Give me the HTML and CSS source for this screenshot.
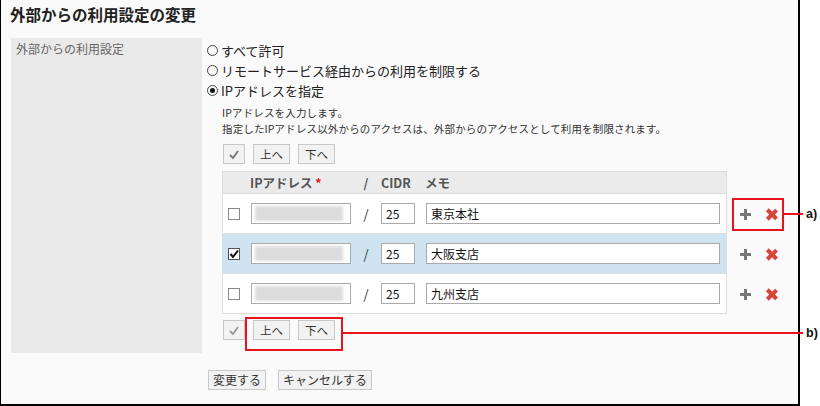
FILE: index.html
```html
<!DOCTYPE html>
<html lang="ja">
<head>
    <meta charset="UTF-8">
    <title>外部からの利用設定の変更</title>
    <link rel="stylesheet" href="styles.css">
</head>
<body>
    <div class="frame">
        <h1>外部からの利用設定の変更</h1>
        <div class="setting">
            <div class="setting-label">外部からの利用設定</div>
            <div class="setting-body">
                <div class="radio-line"><span class="radio"></span>すべて許可</div>
                <div class="radio-line"><span class="radio"></span>リモートサービス経由からの利用を制限する</div>
                <div class="radio-line"><span class="radio on"></span>IPアドレスを指定</div>

                <div class="ip-box">
                    <p class="desc">IPアドレスを入力します。</p>
                    <p class="desc">指定したIPアドレス以外からのアクセスは、外部からのアクセスとして利用を制限されます。</p>

                    <div class="toolbar">
                        <button class="btn btn-check"><svg width="10" height="9" viewBox="0 0 10 9"><path d="M1 5 L4 8 L9 1" fill="none" stroke="#777" stroke-width="1.8"/></svg></button>
                        <button class="btn">上へ</button>
                        <button class="btn">下へ</button>
                    </div>

                    <div class="ip-grid">
                        <div class="ip-head">
                            <span class="h-ip">IPアドレス <span class="req">*</span></span>
                            <span class="h-slash">/</span>
                            <span class="h-cidr">CIDR</span>
                            <span class="h-memo">メモ</span>
                        </div>
                        <div></div>

                        <div class="ip-row">
                            <span class="cb"></span>
                            <span class="field f-ip"><span class="blur"></span></span>
                            <span class="slash">/</span>
                            <span class="field f-cidr">25</span>
                            <span class="field f-memo">東京本社</span>
                        </div>
                        <div class="tools"><span class="i-add"></span><span class="i-del"></span></div>

                        <div class="ip-row selected">
                            <span class="cb checked"><svg width="10" height="10" viewBox="0 0 10 10"><path d="M1.5 5 L4 8 L9 1.5" fill="none" stroke="#111" stroke-width="2"/></svg></span>
                            <span class="field f-ip"><span class="blur"></span></span>
                            <span class="slash">/</span>
                            <span class="field f-cidr">25</span>
                            <span class="field f-memo">大阪支店</span>
                        </div>
                        <div class="tools"><span class="i-add"></span><span class="i-del"></span></div>

                        <div class="ip-row">
                            <span class="cb"></span>
                            <span class="field f-ip"><span class="blur"></span></span>
                            <span class="slash">/</span>
                            <span class="field f-cidr">25</span>
                            <span class="field f-memo">九州支店</span>
                        </div>
                        <div class="tools"><span class="i-add"></span><span class="i-del"></span></div>
                    </div>

                    <div class="toolbar bottom">
                        <button class="btn btn-check"><svg width="10" height="9" viewBox="0 0 10 9"><path d="M1 5 L4 8 L9 1" fill="none" stroke="#999" stroke-width="1.8"/></svg></button>
                        <button class="btn">上へ</button>
                        <button class="btn">下へ</button>
                    </div>
                </div>
            </div>
        </div>

        <div class="actions">
            <button class="btn btn-big">変更する</button>
            <button class="btn btn-big">キャンセルする</button>
        </div>
    </div>

    <!-- 注釈 -->
    <div class="note-box note-a"></div>
    <div class="note-line line-a"></div>
    <span class="note-label label-a">a)</span>
    <div class="note-box note-b"></div>
    <div class="note-line line-b"></div>
    <span class="note-label label-b">b)</span>
</body>
</html>
```
FILE: styles.css
```css
body {
    margin: 0;
    background-color: #fff;
    font-family: "Noto Sans CJK JP", sans-serif;
    color: #333;
    position: relative;
    width: 820px;
    height: 406px;
    overflow: hidden;
}
.frame {
    box-sizing: border-box;
    width: 800px;
    height: 406px;
    border-left: 1px solid #000;
    border-right: 2px solid #000;
    border-bottom: 2px solid #000;
    background-color: #fafafa;
}
h1 {
    margin: 0;
    padding: 3px 0 0 9px;
    height: 38px;
    box-sizing: border-box;
    font-size: 15.5px;
    line-height: 22px;
    color: #222;
}
.setting {
    display: flex;
    margin-left: 10px;
}
.setting-label {
    width: 191px;
    height: 315px;
    box-sizing: border-box;
    padding: 2px 5px;
    background-color: #e9e9e9;
    font-size: 12px;
    line-height: 18px;
    color: #666;
}
.setting-body {
    padding: 2px 0 0 5px;
    font-size: 13px;
}
.radio-line {
    display: flex;
    align-items: center;
    height: 20px;
    color: #222;
}
.radio {
    box-sizing: border-box;
    width: 11px;
    height: 11px;
    margin-right: 3px;
    border: 1px solid #444;
    border-radius: 50%;
    position: relative;
}
.radio.on::after {
    content: "";
    position: absolute;
    left: 2px;
    top: 2px;
    width: 5px;
    height: 5px;
    border-radius: 50%;
    background-color: #111;
}
.ip-box {
    margin-left: 15px;
    padding-top: 5px;
}
.desc {
    margin: 0;
    height: 15.5px;
    font-size: 10.5px;
    line-height: 15.5px;
    letter-spacing: 0.15px;
    color: #333;
}
.toolbar {
    display: flex;
    gap: 8px;
    margin: 8px 0 0 1px;
}
.toolbar.bottom {
    margin-top: 6px;
}
.btn {
    box-sizing: border-box;
    height: 20px;
    padding: 0 6px;
    border: 1px solid #c8c8c8;
    background-color: #f2f2f2;
    font-family: "Noto Sans CJK JP", sans-serif;
    font-size: 11.5px;
    line-height: 18px;
    color: #333;
}
.btn-check {
    width: 22px;
    padding: 0;
    display: flex;
    align-items: center;
    justify-content: center;
}
.ip-grid {
    display: grid;
    grid-template-columns: 505px 60px;
    margin-top: 7px;
}
.ip-head {
    box-sizing: border-box;
    height: 23px;
    display: flex;
    align-items: center;
    border: 1px solid #ddd;
    background-color: #ebebeb;
    font-size: 12.5px;
    font-weight: bold;
    color: #555;
}
.h-ip {
    margin-left: 27px;
    width: 102px;
}
.req {
    color: #e02020;
}
.h-slash {
    width: 28px;
    text-align: center;
}
.h-cidr {
    width: 44px;
    margin-left: 1px;
}
.ip-row {
    box-sizing: border-box;
    height: 40px;
    display: flex;
    align-items: center;
    border: 1px solid #ddd;
    border-top: none;
    background-color: #fff;
}
.ip-row.selected {
    background-color: #cfe3f1;
}
.cb {
    box-sizing: border-box;
    width: 12px;
    height: 12px;
    margin: 0 11px 0 5px;
    border: 1px solid #888;
    background-color: #fff;
    display: flex;
    align-items: center;
    justify-content: center;
}
.cb.checked {
    border-color: #555;
}
.field {
    box-sizing: border-box;
    height: 21px;
    border: 1px solid #aaa;
    background-color: #fff;
    font-size: 12px;
    line-height: 19px;
    padding: 0 4px;
    color: #111;
    overflow: hidden;
}
.f-ip {
    width: 100px;
    padding: 2px 7px 2px 3px;
}
.blur {
    display: block;
    height: 15px;
    background-color: #dcdcdc;
    filter: blur(1.5px);
}
.slash {
    width: 30px;
    text-align: center;
    font-size: 13px;
    color: #333;
}
.f-cidr {
    width: 34px;
}
.f-memo {
    width: 294px;
    margin-left: 11px;
}
.tools {
    display: flex;
    align-items: center;
    gap: 15px;
    padding-left: 13px;
}
.i-add,
.i-del {
    position: relative;
    width: 11px;
    height: 11px;
}
.i-add::before,
.i-add::after,
.i-del::before,
.i-del::after {
    content: "";
    position: absolute;
    left: 4px;
    top: 0;
    width: 3px;
    height: 11px;
    background-color: #777;
}
.i-add::after {
    transform: rotate(90deg);
}
.i-del::before,
.i-del::after {
    left: 4px;
    top: -1px;
    width: 3.5px;
    height: 13px;
    background-color: #d9443a;
    transform: rotate(45deg);
}
.i-del::after {
    transform: rotate(-45deg);
}
.actions {
    display: flex;
    gap: 12px;
    margin: 17px 0 0 207px;
}
.btn-big {
    height: 20px;
    padding: 0 4px;
    font-size: 12px;
}
.note-box {
    position: absolute;
    box-sizing: border-box;
    border: 2px solid #e8141c;
}
.note-a {
    left: 732px;
    top: 198px;
    width: 52px;
    height: 33px;
}
.note-b {
    left: 245px;
    top: 317px;
    width: 98px;
    height: 34px;
}
.note-line {
    position: absolute;
    height: 2px;
    background-color: #e8141c;
}
.line-a {
    left: 784px;
    top: 213px;
    width: 19px;
}
.line-b {
    left: 343px;
    top: 332px;
    width: 460px;
}
.note-label {
    position: absolute;
    font-family: "Liberation Sans", Arial, sans-serif;
    font-weight: bold;
    font-size: 12.5px;
    line-height: 14px;
    color: #111;
}
.label-a {
    left: 806px;
    top: 207px;
}
.label-b {
    left: 806px;
    top: 326px;
}
```
